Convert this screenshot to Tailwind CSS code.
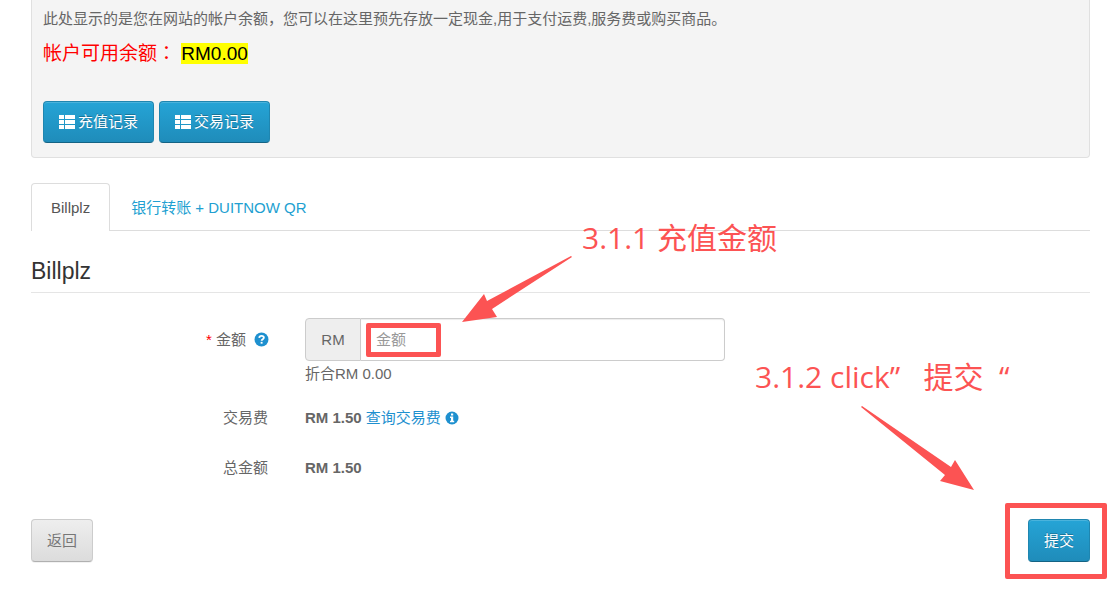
<!DOCTYPE html>
<html lang="zh-CN">

<head>
    <meta charset="UTF-8">
    <meta name="viewport" content="width=device-width, initial-scale=1.0">
    <title>帐户充值</title>
    <!-- Tailwind CSS -->
    <script src="https://cdn.jsdelivr.net/npm/@tailwindcss/browser@4"></script>
</head>

<body class="relative bg-white font-['Liberation_Sans','Noto_Sans_CJK_SC',sans-serif] text-[15px] leading-5 text-[#666]">
    <main class="pl-[31px] pr-[30px] pb-12">

        <!-- 帐户余额 -->
        <section class="rounded-b border border-t-0 border-[#e0e0e0] bg-[#f4f4f4] px-[11px] pt-[9px] pb-[14px]">
            <p>此处显示的是您在网站的帐户余额，您可以在这里预先存放一定现金,用于支付运费,服务费或购买商品。</p>
            <p class="mt-[9px] text-[19px] leading-7 text-[red]">帐户可用余额<span lang="zh-TW" class="font-['Noto_Sans_CJK_TC',sans-serif]">：</span> <mark class="bg-[yellow] text-black">RM0.00</mark></p>
            <div class="mt-[33px] flex gap-[5px]">
                <button type="button" class="flex h-[42px] items-center gap-[3px] rounded border border-[#1f86b0] border-b-[#146384] bg-linear-to-b from-[#25a4d6] to-[#1f8cba] px-[15px] text-white inset-shadow-[0_1px_0_#4ab3dc] text-shadow-[0_-1px_0_#00000040]">
                    <svg class="h-[14px] w-4" viewBox="0 0 16 14" fill="currentColor"><path d="M0 0h5v4H0zM6 0h10v4H6zM0 5h5v4H0zM6 5h10v4H6zM0 10h5v4H0zM6 10h10v4H6z" /></svg>
                    充值记录
                </button>
                <button type="button" class="flex h-[42px] items-center gap-[3px] rounded border border-[#1f86b0] border-b-[#146384] bg-linear-to-b from-[#25a4d6] to-[#1f8cba] px-[15px] text-white inset-shadow-[0_1px_0_#4ab3dc] text-shadow-[0_-1px_0_#00000040]">
                    <svg class="h-[14px] w-4" viewBox="0 0 16 14" fill="currentColor"><path d="M0 0h5v4H0zM6 0h10v4H6zM0 5h5v4H0zM6 5h10v4H6zM0 10h5v4H0zM6 10h10v4H6z" /></svg>
                    交易记录
                </button>
            </div>
        </section>

        <!-- 付款方式 -->
        <nav class="mt-[25px] flex border-b border-[#ddd]">
            <a href="#" class="-mb-px h-12 rounded-t border border-b-0 border-[#ddd] bg-white px-[19px] pt-[14px] text-[#555]">Billplz</a>
            <a href="#" class="px-[21px] pt-[15px] text-[#229fd1]">银行转账 + DUITNOW QR</a>
        </nav>

        <!-- 充值表单 -->
        <form>
            <h2 class="mt-6 border-b border-[#e5e5e5] pb-[5px] text-[23px] leading-8 text-[#333]">Billplz</h2>

            <div class="mt-[25px] grid grid-cols-[238px_1fr] gap-x-9">
                <div class="flex h-[43px] items-center justify-end">
                    <label for="amount"><span class="text-[red]">*</span> 金额</label>
                    <svg class="ml-2 size-[15px]" viewBox="0 0 14 14"><circle cx="7" cy="7" r="6.5" fill="#1e90cf" /><path d="M4.9 5.5C5 4.2 5.8 3.6 7 3.6c1.300 0 2.200.7 2.200 1.800C9.200 6.700 7.100 6.700 7.100 8.200" fill="none" stroke="#fff" stroke-width="1.700" /><path d="M6.200 9.200h1.800v1.700H6.200z" fill="#fff" /></svg>
                </div>
                <div>
                    <div class="relative flex h-[43px] max-w-[420px]">
                        <span class="flex w-14 items-center justify-center rounded-l border border-[#ccc] bg-[#eee]">RM</span>
                        <input id="amount" type="text" placeholder="金额" class="min-w-0 flex-1 rounded-r border border-l-0 border-[#ccc] bg-white px-[15px] inset-shadow-[0_1px_1px_#00000013] placeholder:text-[#999]">
                        <span class="pointer-events-none absolute top-[5px] left-[61px] h-[34px] w-[75px] rounded-xs border-5 border-[#fc5353]"></span>
                    </div>
                    <p class="mt-[3px]">折合RM 0.00</p>
                </div>
            </div>

            <div class="mt-6 grid grid-cols-[238px_1fr] gap-x-9">
                <span class="pr-px text-right">交易费</span>
                <div class="flex items-center gap-1">
                    <strong>RM 1.50</strong>
                    <a href="#" class="flex items-center gap-1 text-[#1e90cf]">查询交易费
                        <svg class="size-[14px]" viewBox="0 0 14 14"><circle cx="7" cy="7" r="6.5" fill="#1e90cf" /><path d="M6 2.500h2.200v1.900H6zM5 5.400h3.200v4.300h1v1.500H5V9.700h1V6.900H5z" fill="#fff" /></svg>
                    </a>
                </div>
            </div>

            <div class="mt-[30px] grid grid-cols-[238px_1fr] gap-x-9">
                <span class="pr-px text-right">总金额</span>
                <strong>RM 1.50</strong>
            </div>

            <div class="mt-[41px] flex justify-between">
                <button type="button" class="h-[43px] rounded border border-[#ccc] border-b-[#b0b0b0] bg-linear-to-b from-[#eee] to-[#dcdcdc] px-[15px] text-[#777] shadow-2xs">返回</button>
                <div class="relative">
                    <button type="submit" class="h-[43px] rounded border border-[#1f86b0] border-b-[#146384] bg-linear-to-b from-[#25a4d6] to-[#1f8cba] px-[15px] text-white inset-shadow-[0_1px_0_#4ab3dc] text-shadow-[0_-1px_0_#00000040]">提交</button>
                    <span class="pointer-events-none absolute -top-4 -right-[17px] -bottom-[17px] -left-[23px] rounded-xs border-5 border-[#fc5353]"></span>
                </div>
            </div>
        </form>
    </main>

    <!-- 步骤标注 -->
    <div class="pointer-events-none absolute inset-0 overflow-hidden font-['Open_Sans','Noto_Sans_CJK_SC',sans-serif] text-[30px] leading-10 whitespace-pre text-[#fc5353]">
        <p class="absolute top-[218px] left-[582px]">3.1.1 充值金额</p>
        <p class="absolute top-[357px] left-[755px]">3.1.2 click”   提交  “</p>
        <svg class="absolute top-[256px] left-[462px] h-[66px] w-[110px]" viewBox="0 0 110 66" fill="currentColor"><path d="M109 0 25 45 22 38 0 66 35 61 30 53 110 1z" /></svg>
        <svg class="absolute top-[406px] left-[861px] h-[84px] w-[113px]" viewBox="0 0 113 84" fill="currentColor"><path d="M1 0 90 61 94 54 113 84 79 75 84 69 0 1z" /></svg>
    </div>
</body>

</html>
